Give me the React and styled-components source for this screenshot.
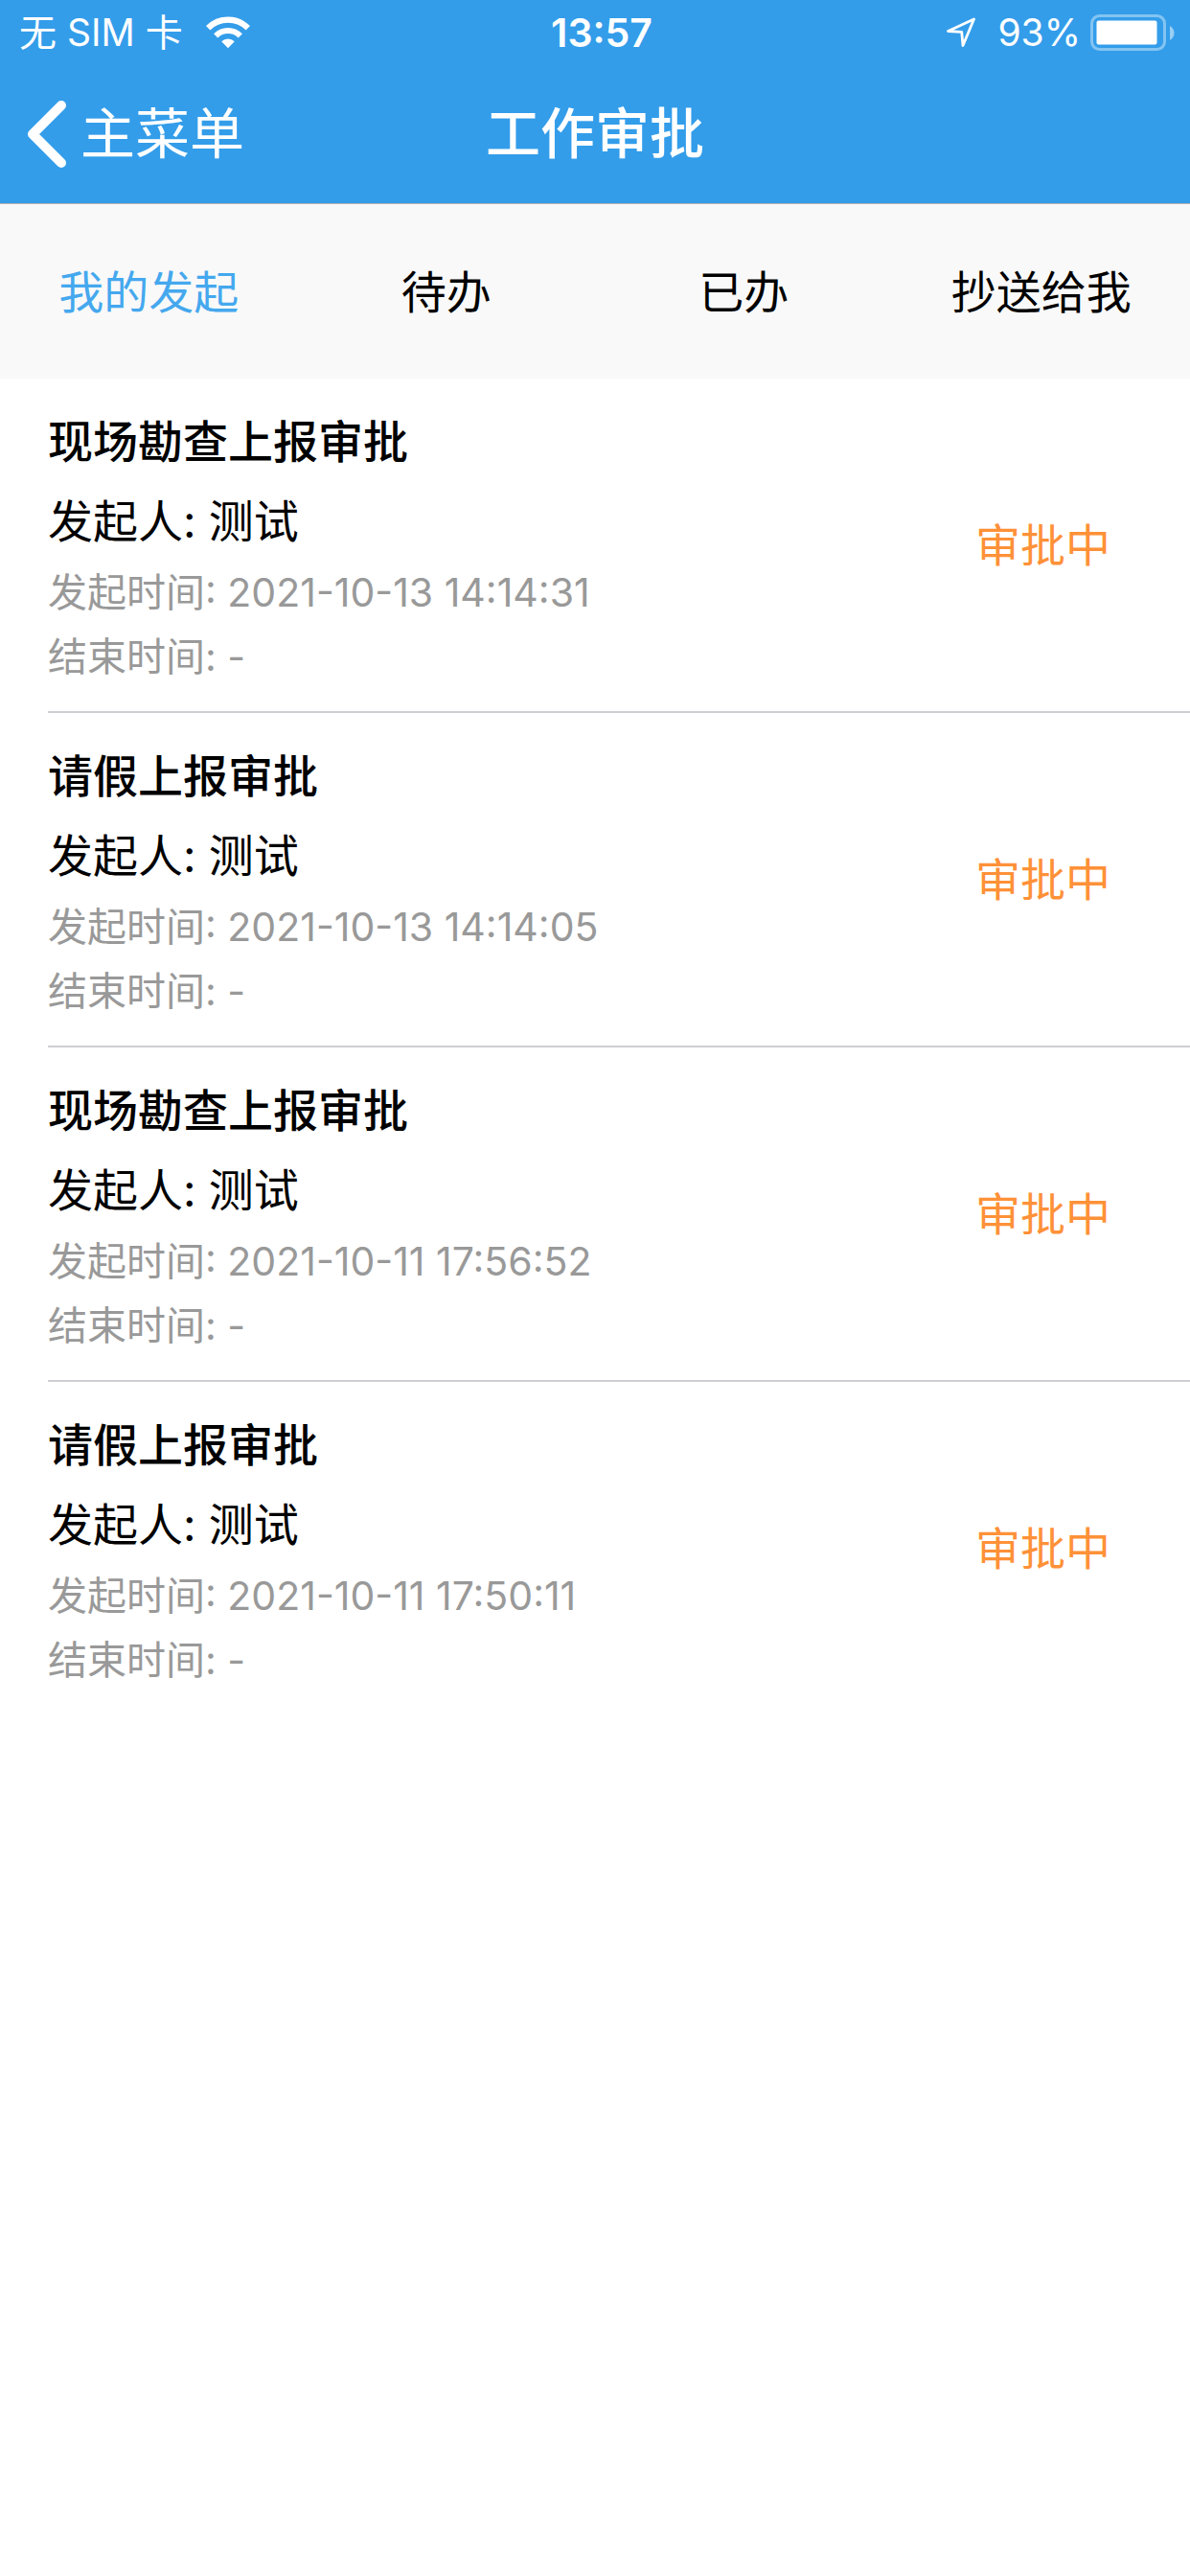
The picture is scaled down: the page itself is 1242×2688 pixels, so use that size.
import React, { useState } from "react";
import styled, { createGlobalStyle } from "styled-components";

const GlobalStyle = createGlobalStyle`
  * { box-sizing: border-box; }
  body {
    margin: 0;
    background: #ffffff;
    color: #000000;
    font-family: Inter, "Noto Sans CJK SC", sans-serif;
  }
  button {
    border: 0;
    padding: 0;
    background: none;
    color: inherit;
    font: inherit;
    cursor: pointer;
  }
`;

const Header = styled.header`
  background: #339dea;
  color: #ffffff;
  border-bottom: 1px solid #b2b2b2;
`;

const StatusBar = styled.div`
  display: grid;
  grid-template-columns: 1fr auto 1fr;
  align-items: center;
  height: 68px;
  padding: 0 14px 0 20px;
  font-size: 39px;
  line-height: 68px;
`;

const StatusGroup = styled.div`
  display: flex;
  align-items: center;
  justify-content: ${(p) => (p.$end ? "flex-end" : "flex-start")};
  gap: ${(p) => (p.$end ? "10px" : "24px")};
  white-space: nowrap;
`;

const Clock = styled.time`
  padding-left: 8px;
  font-size: 41px;
  font-weight: 600;
`;

const Location = styled.svg`
  margin-right: 12px;
`;

const NavBar = styled.div`
  display: grid;
  grid-template-columns: 1fr auto 1fr;
  align-items: center;
  height: 144px;
  padding: 0 26px;
  font-size: 57px;
  line-height: 84px;
`;

const BackButton = styled.button`
  && {
    display: flex;
    align-items: center;
    justify-self: start;
    gap: 14px;
  }
`;

const Title = styled.h1`
  margin: 0;
  font-size: inherit;
  font-weight: 500;
`;

const Tabs = styled.nav`
  display: grid;
  grid-template-columns: repeat(4, 1fr);
  background: #f9f9f9;
`;

const Tab = styled.button`
  && {
    height: 182px;
    padding-bottom: 6px;
    font-size: 47px;
    color: ${(p) => (p.$active ? "#45a8ee" : "#000000")};
  }
`;

const List = styled.ul`
  margin: 0;
  padding: 0 0 0 50px;
  list-style: none;
`;

const Item = styled.li`
  display: flex;
  align-items: center;
  justify-content: space-between;
  padding: 24px 83px 23px 0;
  border-bottom: 2px solid #cfcfd3;

  &:last-child {
    border-bottom: 0;
  }
`;

const ItemTitle = styled.h2`
  margin: 0;
  font-size: 47px;
  font-weight: 500;
  line-height: 84px;
`;

const Initiator = styled.p`
  margin: 0;
  font-size: 47px;
  line-height: 82px;
`;

const TimeLine = styled.p`
  margin: 0;
  color: #999999;
  font-size: 41px;
  line-height: 67px;
`;

const Status = styled.span`
  padding-bottom: 8px;
  color: #ff9138;
  font-size: 47px;
`;

const TABS = ["我的发起", "待办", "已办", "抄送给我"];

const ITEMS = [
  { title: "现场勘查上报审批", start: "2021-10-13 14:14:31" },
  { title: "请假上报审批", start: "2021-10-13 14:14:05" },
  { title: "现场勘查上报审批", start: "2021-10-11 17:56:52" },
  { title: "请假上报审批", start: "2021-10-11 17:50:11" },
];

function WifiIcon() {
  return (
    <svg width="46" height="34" viewBox="0 0 46 34" fill="none" aria-hidden="true">
      <path d="M2.2 12.3a29.5 29.5 0 0 1 41.6 0" stroke="#fff" strokeWidth="6.2" />
      <path d="M10.2 20.3a18.2 18.2 0 0 1 25.6 0" stroke="#fff" strokeWidth="6" />
      <path d="M16.2 26.2a9.8 9.8 0 0 1 13.6 0L23 33.2z" fill="#fff" />
    </svg>
  );
}

function LocationIcon() {
  return (
    <Location width="32" height="32" viewBox="0 0 32 32" fill="none" aria-hidden="true">
      <path
        d="M29.5 2 2.5 14.5l14.2.8 1.3 14.2z"
        stroke="#fff"
        strokeWidth="2.8"
        strokeLinejoin="round"
      />
    </Location>
  );
}

function BatteryIcon() {
  return (
    <svg width="90" height="38" viewBox="0 0 90 38" fill="none" aria-hidden="true">
      <rect x="1.5" y="1.5" width="76" height="35" rx="8" stroke="#fff" strokeOpacity=".4" strokeWidth="3" />
      <rect x="6.5" y="6.5" width="63" height="25" rx="2" fill="#fff" />
      <path d="M83 12c6 3 6 12 0 15z" fill="#fff" fillOpacity=".5" />
    </svg>
  );
}

function ChevronIcon() {
  return (
    <svg width="44" height="72" viewBox="0 0 44 72" fill="none" aria-hidden="true">
      <path d="M38 6 8 36l30 30" stroke="#fff" strokeWidth="10" strokeLinecap="round" strokeLinejoin="round" />
    </svg>
  );
}

export default function App() {
  const [active, setActive] = useState(0);

  return (
    <>
      <GlobalStyle />
      <Header>
        <StatusBar>
          <StatusGroup>
            <span>无 SIM 卡</span>
            <WifiIcon />
          </StatusGroup>
          <Clock>13:57</Clock>
          <StatusGroup $end>
            <LocationIcon />
            <span>93%</span>
            <BatteryIcon />
          </StatusGroup>
        </StatusBar>
        <NavBar>
          <BackButton type="button">
            <ChevronIcon />
            主菜单
          </BackButton>
          <Title>工作审批</Title>
        </NavBar>
      </Header>
      <Tabs>
        {TABS.map((label, i) => (
          <Tab
            key={label}
            type="button"
            $active={i === active}
            aria-current={i === active ? "page" : undefined}
            onClick={() => setActive(i)}
          >
            {label}
          </Tab>
        ))}
      </Tabs>
      <List>
        {ITEMS.map((item) => (
          <Item key={item.start}>
            <div>
              <ItemTitle>{item.title}</ItemTitle>
              <Initiator>发起人: 测试</Initiator>
              <TimeLine>发起时间: {item.start}</TimeLine>
              <TimeLine>结束时间: -</TimeLine>
            </div>
            <Status>审批中</Status>
          </Item>
        ))}
      </List>
    </>
  );
}
